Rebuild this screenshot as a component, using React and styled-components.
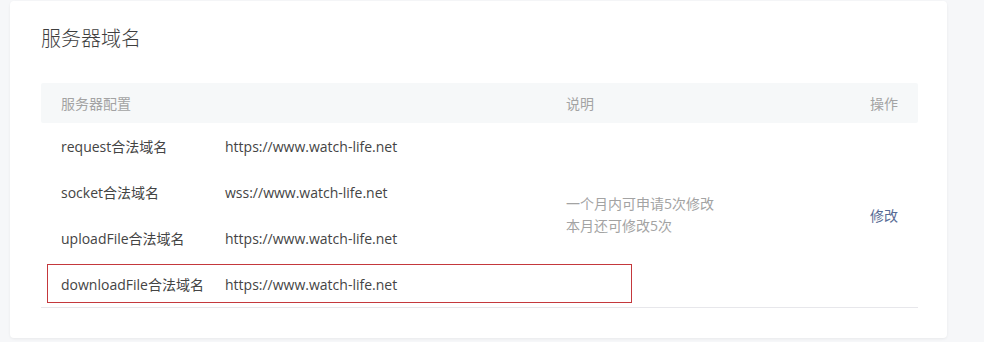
import React from "react";
import styled, { createGlobalStyle } from "styled-components";

const GlobalStyle = createGlobalStyle`
  html, body {
    margin: 0;
    padding: 0;
    background: #f6f7f9;
    font-family: "Open Sans", "Noto Sans CJK SC", sans-serif;
  }
`;

const domains = [
  { name: "request合法域名", url: "https://www.watch-life.net" },
  { name: "socket合法域名", url: "wss://www.watch-life.net" },
  { name: "uploadFile合法域名", url: "https://www.watch-life.net" },
  { name: "downloadFile合法域名", url: "https://www.watch-life.net", marked: true },
];

function App() {
  return (
    <>
      <GlobalStyle />
      <Page>
        <Card>
          <Title>服务器域名</Title>
          <Table>
            <HeadRow>
              <HeadCell>服务器配置</HeadCell>
              <HeadCell />
              <HeadCell>说明</HeadCell>
              <HeadCell $right>操作</HeadCell>
            </HeadRow>
            <Body>
              <Domains>
                {domains.map((d) => (
                  <DomainRow key={d.name} $marked={d.marked}>
                    <Label>{d.name}</Label>
                    <Url>{d.url}</Url>
                  </DomainRow>
                ))}
              </Domains>
              <Note>
                <div>一个月内可申请5次修改</div>
                <div>本月还可修改5次</div>
              </Note>
              <Action>修改</Action>
            </Body>
          </Table>
        </Card>
      </Page>
    </>
  );
}

const Page = styled.div`
  padding: 1px 37px 4px 10px;
`;

const Card = styled.div`
  background: #fff;
  border-radius: 4px;
  box-shadow: 0 1px 3px rgba(0, 0, 0, 0.06);
  height: 337px;
  box-sizing: border-box;
  padding: 24px 29px 0 31px;
`;

const Title = styled.h2`
  margin: 0 0 30px;
  font-size: 20px;
  line-height: 28px;
  font-weight: 300;
  color: #3e3e3e;
`;

const Table = styled.div`
  font-size: 14px;
  color: #444;
`;

const HeadRow = styled.div`
  display: grid;
  grid-template-columns: 164px 341px 1fr auto;
  align-items: center;
  height: 40px;
  padding: 0 20px;
  background: #f6f8f9;
  border-radius: 2px;
`;

const HeadCell = styled.div`
  color: #a3a3a3;
  text-align: ${(p) => (p.$right ? "right" : "left")};
`;

const Body = styled.div`
  display: grid;
  grid-template-columns: 505px 1fr auto;
  align-items: center;
  padding: 0 20px;
  border-bottom: 1px solid #e7e7eb;
`;

const Domains = styled.div`
  display: flex;
  flex-direction: column;
`;

const DomainRow = styled.div`
  position: relative;
  display: grid;
  grid-template-columns: 164px 1fr;
  align-items: center;
  height: 46px;
  &::after {
    content: "";
    display: ${(p) => (p.$marked ? "block" : "none")};
    position: absolute;
    left: -14px;
    top: 3px;
    width: 585px;
    height: 39px;
    box-sizing: border-box;
    border: 1px solid #c4383c;
  }
`;

const Label = styled.div`
  white-space: nowrap;
`;

const Url = styled.div`
  white-space: nowrap;
`;

const Note = styled.div`
  color: #a3a3a3;
  line-height: 22px;
`;

const Action = styled.a`
  color: #576b95;
  cursor: pointer;
`;

export default App;
